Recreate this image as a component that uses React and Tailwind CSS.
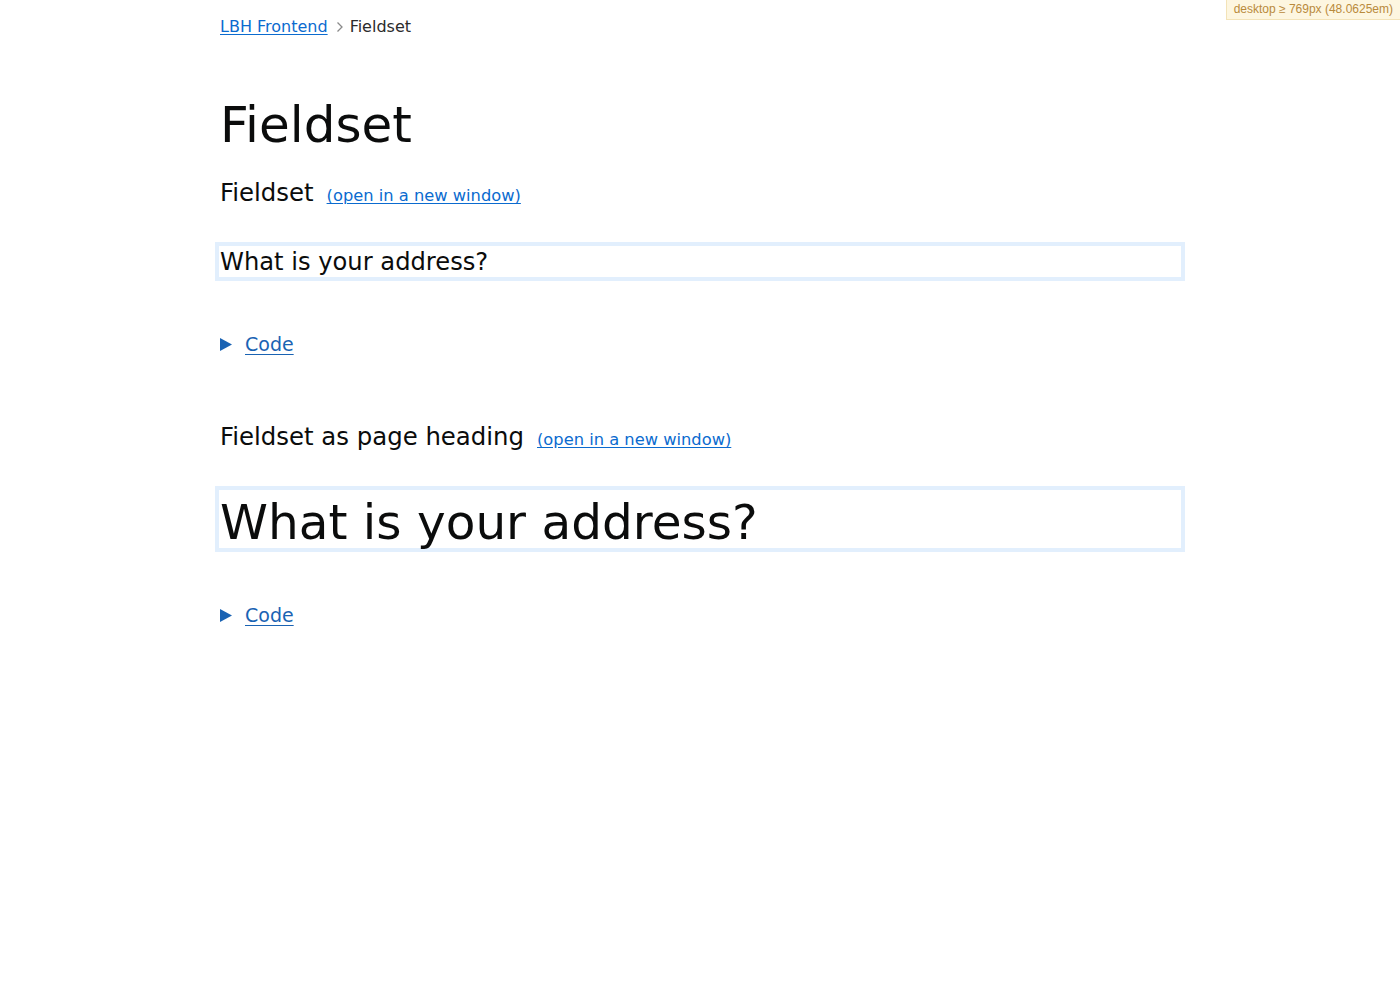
import React from "react"

const font = { fontFamily: '"DejaVu Sans", sans-serif' }

function OpenLink() {
  return (
    <a href="#" className="ml-[13px] text-[16.3px] leading-none text-[#0b6bcf] underline underline-offset-2">
      (open in a new window)
    </a>
  )
}

function CodeToggle({ className }) {
  return (
    <div className={`flex h-[24px] items-center ${className}`}>
      <svg width="12" height="13" viewBox="0 0 12 13" className="mr-[13px]">
        <polygon points="0,0 12,6.5 0,13" fill="#1a63b3" />
      </svg>
      <a href="#" className="text-[19px] leading-[24px] text-[#1a63b3] underline underline-offset-[3px]">
        Code
      </a>
    </div>
  )
}

function Example({ title, legend, big, className }) {
  return (
    <section className={className}>
      <h2 className="flex items-baseline text-[24.4px] leading-[30px] text-[#0b0c0c]">
        {title}
        <OpenLink />
      </h2>
      <div className="-mx-[5px] mt-[34px] border-4 border-[#e2effd] pl-[1px]">
        {big ? (
          <div className="h-[58px] pt-[7px] text-[48.5px] leading-[51px] text-[#0b0c0c]">{legend}</div>
        ) : (
          <div className="h-[31px] pt-[2px] text-[24.2px] leading-[28px] text-[#0b0c0c]">{legend}</div>
        )}
      </div>
      <CodeToggle className="mt-[51px]" />
    </section>
  )
}

export default function App() {
  return (
    <div className="relative min-h-[1000px] bg-white" style={font}>
      <div
        className="absolute right-0 top-0 border-b border-l border-[#f3e3b8] bg-[#fdf6e0] px-[7px] py-[2px] text-[12px] leading-[15px] text-[#b98a3c]"
        style={{ fontFamily: '"Liberation Sans", Arial, sans-serif' }}
      >
        desktop ≥ 769px (48.0625em)
      </div>

      <div className="mx-auto w-[960px] pt-[17px]">
        <nav className="flex h-[20px] items-center text-[16px] leading-[20px]">
          <a href="#" className="text-[#0b6bcf] underline underline-offset-2">
            LBH Frontend
          </a>
          <svg width="8" height="12" viewBox="0 0 8 12" className="ml-[8px] mr-[6px]">
            <path d="M1.5 1.5 L6 6 L1.5 10.5" fill="none" stroke="#8a8a8a" strokeWidth="1.3" />
          </svg>
          <span className="text-[#2b2b2b]">Fieldset</span>
        </nav>

        <h1 className="mt-[64px] text-[50px] leading-[48px] text-[#0b0c0c]">Fieldset</h1>

        <Example className="mt-[29px]" title="Fieldset" legend="What is your address?" />
        <Example className="mt-[66px]" title="Fieldset as page heading" legend="What is your address?" big />
      </div>
    </div>
  )
}
